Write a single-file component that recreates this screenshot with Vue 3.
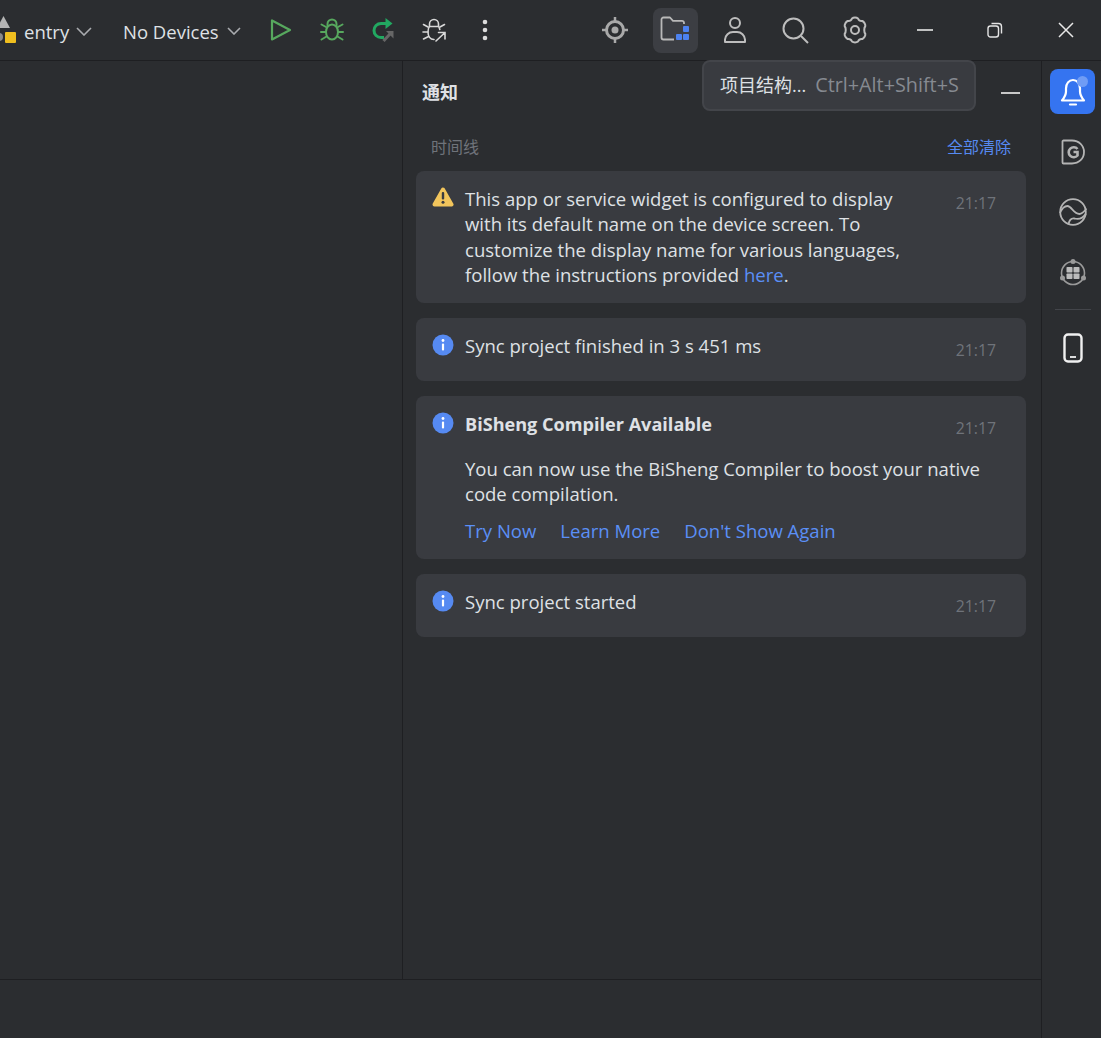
<script setup>
const infoCards = { second: 'Sync project finished in 3 s 451 ms', last: 'Sync project started' }
</script>

<template>
  <div class="app">
    <header class="toolbar">
      <div class="logo">
        <svg width="18" height="30" viewBox="0 0 18 30">
          <path d="M3.500 1 L10 13 L-3 13 Z" fill="#b4b4b4" />
          <rect x="5" y="17" width="11" height="11" rx="1" fill="#f0bf1f" />
          <circle cx="-1" cy="22" r="4" fill="#8a8a8a" />
        </svg>
      </div>
      <span class="tb-text entry">entry</span>
      <svg class="chev big" width="16" height="9" viewBox="0 0 16 9"><path d="M1 1l7 7 7-7" /></svg>
      <span class="tb-text devices">No Devices</span>
      <svg class="chev small" width="14" height="8" viewBox="0 0 14 8"><path d="M1 1l6 6 6-6" /></svg>

      <div class="run-group">
        <div class="tb-icon">
          <svg width="22" height="24" viewBox="0 0 22 24" fill="none" stroke="#57a85e" stroke-width="2.200" stroke-linejoin="round"><path d="M2 2.500v19l18-9.500z" /></svg>
        </div>
        <div class="tb-icon">
          <svg width="24" height="24" viewBox="0 0 24 24" fill="none" stroke="#57a85e" stroke-width="2" stroke-linecap="round"><ellipse cx="12" cy="14" rx="6" ry="7.500" /><path d="M7.500 7.500V6a4.500 4.500 0 0 1 9 0v1.500M1.500 6.500l4.500 2.500M22.500 6.500L18 9M1 14h5M23 14h-5M1.500 21.500l5-3M22.500 21.500l-5-3" /></svg>
        </div>
        <div class="tb-icon">
          <svg width="24" height="24" viewBox="0 0 24 24" fill="none"><path d="M15 5.500H10a7 7 0 0 0 0 14h3" stroke="#22a861" stroke-width="3" /><path d="M14.500 0l7 5.500-7 5.500z" fill="#22a861" /><path d="M12.500 23l6.500-7" stroke="#666" stroke-width="3" /><path d="M15 13h7.500v7.500z" fill="#666" /></svg>
        </div>
        <div class="tb-icon">
          <svg width="24" height="24" viewBox="0 0 24 24" fill="none" stroke="#d8d8d8" stroke-width="1.600" stroke-linecap="round"><path d="M12 21.500c-4 0-6-3.500-6-7.500 0-3 1-5 1.500-5.500h9c.5.500 1 1.500 1.300 3" /><path d="M7.500 8V6a4.500 4.500 0 0 1 9 0v2M1.500 6.500l4.500 2.500M22.500 6.500L18 9M1 14h5M1.500 21l5-2.500" /><path d="M14 23l8.500-8M16.500 14.500H23V21" /></svg>
        </div>
        <div class="tb-icon">
          <svg width="6" height="22" viewBox="0 0 6 22" fill="#dcdcdc"><circle cx="3" cy="3" r="2.300" /><circle cx="3" cy="11" r="2.300" /><circle cx="3" cy="19" r="2.300" /></svg>
        </div>
      </div>

      <div class="right-group">
        <div class="tb-icon wide">
          <svg width="26" height="26" viewBox="0 0 26 26" fill="none"><circle cx="13" cy="13" r="8.500" stroke="#a9a9a9" stroke-width="3" /><circle cx="13" cy="13" r="3.500" fill="#a9a9a9" /><path d="M13 0v4M13 22v4M0 13h4M22 13h4" stroke="#a9a9a9" stroke-width="2.500" /></svg>
        </div>
        <div class="tb-icon wide">
          <div class="active-btn">
            <svg width="30" height="28" viewBox="0 0 30 28" fill="none"><path d="M24 8V6.800a2 2 0 0 0-2-2H13L10 1.500H3.500a2 2 0 0 0-2 2v18a2 2 0 0 0 2 2H14" stroke="#b9b9b9" stroke-width="1.800" stroke-linejoin="round" /><rect x="23" y="10" width="6" height="6" rx="1" fill="#4c82f0" /><rect x="16" y="18" width="6" height="6" rx="1" fill="#4c82f0" /><rect x="23" y="18" width="6" height="6" rx="1" fill="#4c82f0" /></svg>
          </div>
        </div>
        <div class="tb-icon wide">
          <svg width="24" height="28" viewBox="0 0 24 28" fill="none" stroke="#bdbdbd" stroke-width="2"><circle cx="12" cy="7" r="5" /><path d="M2 26v-2.500a8 8 0 0 1 8-7.500h4a8 8 0 0 1 8 7.500V26z" stroke-linejoin="round" /></svg>
        </div>
        <div class="tb-icon wide">
          <svg width="28" height="28" viewBox="0 0 28 28" fill="none" stroke="#bdbdbd" stroke-width="2"><circle cx="12.500" cy="12.500" r="10" /><path d="M20 20l7 7" /></svg>
        </div>
        <div class="tb-icon wide">
          <svg width="28" height="28" viewBox="0 0 28 28" fill="none" stroke="#bdbdbd" stroke-width="2" stroke-linejoin="round"><path d="M11 2.500c1.500-1.200 4.500-1.200 6 0 .8 2 2.200 2.800 4.400 2.500 1.700.7 3.200 3.300 2.900 5.200-1.400 1.500-1.400 6.100 0 7.600.3 1.900-1.200 4.500-2.900 5.200-2.200-.3-3.600.5-4.400 2.500-1.500 1.200-4.500 1.200-6 0-.8-2-2.200-2.800-4.400-2.500-1.700-.7-3.200-3.300-2.900-5.200 1.400-1.500 1.400-6.100 0-7.600C3.400 8.300 4.900 5.700 6.600 5c2.200.3 3.600-.5 4.400-2.500z" /><circle cx="14" cy="14" r="4" /></svg>
        </div>
      </div>

      <div class="win-group">
        <div class="win-btn"><svg width="16" height="2" viewBox="0 0 16 2"><path d="M0 1h16" stroke="#e8e8e8" stroke-width="1.600" /></svg></div>
        <div class="win-btn"><svg width="16" height="16" viewBox="0 0 16 16" fill="none" stroke="#e4e4e4" stroke-width="1.400"><rect x="1" y="4" width="10.500" height="11" rx="2.500" /><path d="M4.500 1.500h7a3 3 0 0 1 3 3v7" /></svg></div>
        <div class="win-btn"><svg width="16" height="16" viewBox="0 0 16 16" stroke="#e8e8e8" stroke-width="1.500"><path d="M1 1l14 14M15 1L1 15" /></svg></div>
      </div>
    </header>

    <div class="body">
      <div class="main">
        <div class="panes">
          <div class="left"></div>
          <section class="panel">
            <div class="panel-head">
              <h2>通知</h2>
              <span class="dash"></span>
            </div>
            <div class="timeline-row">
              <span class="timeline">时间线</span>
              <a class="clear">全部清除</a>
            </div>

            <article class="card">
              <svg class="ic" width="22" height="20" viewBox="0 0 22 20"><path d="M11 2.500 L19.500 17.500 H2.500 Z" fill="#f2c55c" stroke="#f2c55c" stroke-width="4" stroke-linejoin="round" /><rect x="9.800" y="5" width="2.400" height="7.500" rx="1" fill="#3a3b40" /><circle cx="11" cy="15.200" r="1.500" fill="#3a3b40" /></svg>
              <p class="txt">This app or service widget is configured to display<br>with its default name on the device screen. To<br>customize the display name for various languages,<br>follow the instructions provided <a>here</a>.</p>
              <time>21:17</time>
            </article>

            <article class="card single">
              <svg class="ic" width="22" height="22" viewBox="0 0 22 22"><circle cx="11" cy="11" r="10.500" fill="#568af2" /><rect x="9.900" y="9.500" width="2.200" height="7" rx="1" fill="#fff" /><circle cx="11" cy="6.500" r="1.400" fill="#fff" /></svg>
              <p class="txt">{{ infoCards.second }}</p>
              <time>21:17</time>
            </article>

            <article class="card">
              <svg class="ic" width="22" height="22" viewBox="0 0 22 22"><circle cx="11" cy="11" r="10.500" fill="#568af2" /><rect x="9.900" y="9.500" width="2.200" height="7" rx="1" fill="#fff" /><circle cx="11" cy="6.500" r="1.400" fill="#fff" /></svg>
              <div class="txt">
                <p class="title">BiSheng Compiler Available</p>
                <p class="desc">You can now use the BiSheng Compiler to boost your native<br>code compilation.</p>
                <div class="links"><a>Try Now</a><a>Learn More</a><a>Don't Show Again</a></div>
              </div>
              <time>21:17</time>
            </article>

            <article class="card single">
              <svg class="ic" width="22" height="22" viewBox="0 0 22 22"><circle cx="11" cy="11" r="10.500" fill="#568af2" /><rect x="9.900" y="9.500" width="2.200" height="7" rx="1" fill="#fff" /><circle cx="11" cy="6.500" r="1.400" fill="#fff" /></svg>
              <p class="txt">{{ infoCards.last }}</p>
              <time>21:17</time>
            </article>
          </section>
        </div>
        <footer class="status"></footer>
      </div>

      <aside class="rail">
        <div class="bell">
          <svg width="26" height="30" viewBox="0 0 26 30" fill="none" stroke="#fff" stroke-width="2.200" stroke-linejoin="round"><path d="M2 23.500c2-2.500 4-5 4-9v-3c0-5 3-8.500 7-8.500s7 3.500 7 8.500v3c0 4 2 6.500 4 9z" /><path d="M10 27.500h6" stroke-linecap="round" /></svg>
          <span class="dot"></span>
        </div>
        <div class="rail-icon">
          <svg width="24" height="26" viewBox="0 0 24 26" fill="none"><path d="M1.500 2.500a1 1 0 0 1 1-1H11C18 1.500 23 6.500 23 13s-5 11.500-12 11.500H2.500a1 1 0 0 1-1-1z" stroke="#b4b4b4" stroke-width="1.800" /><path d="M16.500 10a5 5 0 1 0 0 6.500V13h-4" stroke="#b4b4b4" stroke-width="2.600" /></svg>
        </div>
        <div class="rail-icon">
          <svg width="28" height="28" viewBox="0 0 28 28" fill="none" stroke="#b4b4b4" stroke-width="1.800"><circle cx="14" cy="14" r="12.800" /><path d="M1 15C3.500 9 6.500 8 8.500 8c4 0 6 8 12 8 3 0 5-3 7-5.500" /><path d="M9.500 26c1-4.500 3-6 6-5.500 3 .8 8 .500 11.500-5" /></svg>
        </div>
        <div class="rail-icon">
          <svg width="28" height="28" viewBox="0 0 28 28" fill="none"><circle cx="14" cy="15" r="11.500" stroke="#9a9a9a" stroke-width="1.600" /><circle cx="14" cy="3.500" r="2.500" fill="#9a9a9a" /><circle cx="3.500" cy="20" r="2.500" fill="#9a9a9a" /><circle cx="24.500" cy="20" r="2.500" fill="#9a9a9a" /><rect x="7.500" y="9" width="6" height="5.500" rx=".8" fill="#bbb" /><rect x="14.500" y="9" width="6" height="5.500" rx=".8" fill="#bbb" /><rect x="7.500" y="15.500" width="6" height="5.500" rx=".8" fill="#bbb" /><rect x="14.500" y="15.500" width="6" height="5.500" rx=".8" fill="#bbb" /></svg>
        </div>
        <div class="rail-sep"></div>
        <div class="rail-icon">
          <svg width="20" height="30" viewBox="0 0 20 30" fill="none" stroke="#f0f0f0" stroke-width="2.400"><rect x="1.500" y="1.500" width="17" height="27" rx="3.500" /><path d="M7 24h6" stroke-width="1.800" /></svg>
        </div>
      </aside>
    </div>

    <div class="tooltip">
      <span class="tt-name">项目结构...</span>
      <span class="tt-key">Ctrl+Alt+Shift+S</span>
    </div>
  </div>
</template>

<style>
html, body { margin: 0; background: #2b2d30; }
</style>

<style scoped>
.app {
  position: relative;
  width: 1101px;
  height: 1038px;
  overflow: hidden;
  display: flex;
  flex-direction: column;
  background: #2b2d30;
  color: #dfe1e5;
  font-family: "Open Sans", "Noto Sans CJK SC", sans-serif;
}
p, h2 { margin: 0; }
.toolbar {
  height: 60px;
  flex: none;
  display: flex;
  align-items: center;
  border-bottom: 1px solid #1e1f22;
  white-space: nowrap;
  overflow: hidden;
}
.toolbar > * { flex: none; }
.logo { width: 24px; height: 30px; }
.logo svg { overflow: visible; display: block; }
.tb-text { font-size: 18.500px; color: #dfe1e5; margin-top: 2px; }
.entry { width: 52px; }
.chev { fill: none; stroke: #a9abaf; stroke-width: 1.600; margin-top: 2px; }
.chev.big { margin-right: 31px; }
.devices { width: 104px; }
.run-group { display: flex; margin-left: 14px; }
.tb-icon {
  width: 51px;
  height: 60px;
  flex: none;
  display: flex;
  align-items: center;
  justify-content: center;
}
.right-group { display: flex; margin-left: 75px; }
.tb-icon.wide { width: 60px; }
.active-btn {
  width: 45px;
  height: 45px;
  border-radius: 8px;
  background: #3c3e43;
  display: flex;
  align-items: center;
  justify-content: center;
}
.win-group { display: flex; margin-left: 4.500px; }
.win-btn {
  width: 70.500px;
  height: 60px;
  flex: none;
  display: flex;
  align-items: center;
  justify-content: center;
}
.body { flex: 1; display: flex; min-height: 0; }
.main { flex: 1; display: flex; flex-direction: column; min-width: 0; }
.panes { flex: 1; display: flex; min-height: 0; }
.left { width: 402px; border-right: 1px solid #1e1f22; flex: none; }
.panel { flex: 1; padding: 0 15px 0 13px; min-width: 0; }
.panel-head {
  height: 59px;
  display: flex;
  align-items: center;
  justify-content: space-between;
  padding: 0 6px;
}
.panel-head h2 { font-size: 18px; font-weight: 700; color: #dfe1e5; }
.dash { width: 19px; height: 2px; background: #c8c8c8; margin: 4px 0 0; }
.timeline-row {
  height: 47px;
  margin: 2px 0;
  display: flex;
  align-items: center;
  justify-content: space-between;
  padding: 0 15px;
  font-size: 16px;
}
.timeline { color: #6f737a; }
.clear { color: #568af2; }
.card {
  display: flex;
  align-items: flex-start;
  background: #393b40;
  border-radius: 8px;
  padding: 15px 30px 15.400px 16px;
  margin-bottom: 15px;
  box-sizing: border-box;
}
.card.single { min-height: 62.600px; }
.ic { flex: none; margin-right: 11px; margin-top: 1px; }
.txt { flex: 1; min-width: 0; white-space: nowrap; font-size: 18.550px; line-height: 25.400px; color: #dfe1e5; }
.card p a, .links a { color: #5b8ff6; }
time { font-size: 15.800px; color: #6f737a; margin-top: 6px; line-height: 22px; flex: none; }
.title { font-weight: 700; font-size: 18.100px; padding-top: 1px; }
.desc { margin-top: 18.600px; }
.links { display: flex; gap: 24px; margin-top: 11.800px; }
.status { height: 58px; border-top: 1px solid #1e1f22; flex: none; }
.rail {
  width: 60px;
  flex: none;
  border-left: 1px solid #1e1f22;
  display: flex;
  flex-direction: column;
  align-items: center;
  padding: 8px 0 0 2px;
  box-sizing: border-box;
}
.bell {
  position: relative;
  width: 45px;
  height: 45px;
  border-radius: 8px;
  background: #3574f0;
  display: flex;
  align-items: center;
  justify-content: center;
}
.dot {
  position: absolute;
  top: 7px;
  right: 7px;
  width: 11px;
  height: 11px;
  border-radius: 50%;
  background: #6f9cf5;
}
.rail-icon {
  width: 45px;
  height: 60px;
  display: flex;
  align-items: center;
  justify-content: center;
}
.bell + .rail-icon { margin-top: 8px; }
.rail-sep { width: 36px; height: 1px; background: #43454a; margin: 7px 0 8px; }
.tooltip {
  position: absolute;
  left: 702px;
  top: 60px;
  width: 274px;
  height: 51px;
  box-sizing: border-box;
  background: #393b40;
  border: 2px solid #43454a;
  border-radius: 8px;
  display: flex;
  align-items: center;
  padding: 0 16px 3px;
  font-size: 18px;
  white-space: nowrap;
}
.tt-name { color: #dfe1e5; margin-right: 9px; }
.tt-key { color: #868a91; font-size: 19.800px; }
</style>
